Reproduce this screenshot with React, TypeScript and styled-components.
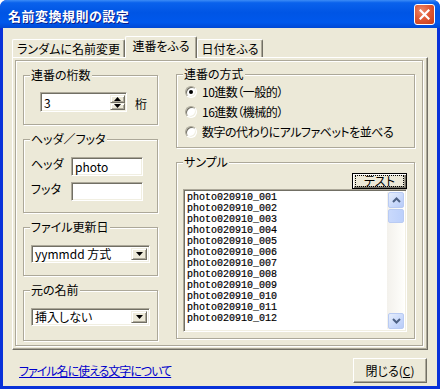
import React from 'react'
import styled, { createGlobalStyle } from 'styled-components'

const UI_FONT = `"Noto Sans CJK JP", "Noto Sans", sans-serif`

const GlobalStyle = createGlobalStyle`
  html, body {
    margin: 0;
    padding: 0;
    background: #ffffff;
  }
  body {
    font-family: ${UI_FONT};
    font-size: 12px;
    font-feature-settings: "palt" 1;
    color: #000;
  }
  * {
    box-sizing: border-box;
  }
`

const samples = Array.from({ length: 12 }, (_, i) => `photo020910_${String(i + 1).padStart(3, '0')}`)

export default function App() {
  return (
    <>
      <GlobalStyle />
      <Window>
        <TitleBar>
          <TitleText>名前変換規則の設定</TitleText>
          <CloseBox>
            <svg width="11" height="11" viewBox="0 0 11 11">
              <path d="M1.5 1.5 L9.5 9.5 M9.5 1.5 L1.5 9.5" stroke="#fff" strokeWidth="2.2" strokeLinecap="square" />
            </svg>
          </CloseBox>
        </TitleBar>

        <Client>
          <TabStrip>
            <Tab $w={113}>ランダムに名前変更</Tab>
            <Tab $w={72} $active>連番をふる</Tab>
            <Tab $w={66}>日付をふる</Tab>
          </TabStrip>

          <Panel>
            <InnerFrame>
              <LeftColumn>
                <Group $h={50} $pad="16px 0 0 16px">
                  <GroupTitle>連番の桁数</GroupTitle>
                  <InlineRow>
                    <SpinBox>
                      <FieldText>3</FieldText>
                      <SpinButtons>
                        <SpinButton>
                          <svg width="7" height="4" viewBox="0 0 7 4"><polygon points="3.5,0 7,4 0,4" fill="#000" /></svg>
                        </SpinButton>
                        <SpinButton>
                          <svg width="7" height="4" viewBox="0 0 7 4"><polygon points="0,0 7,0 3.5,4" fill="#000" /></svg>
                        </SpinButton>
                      </SpinButtons>
                    </SpinBox>
                    <Unit>桁</Unit>
                  </InlineRow>
                </Group>

                <Group $h={74} $pad="17px 0 0 7px">
                  <GroupTitle>ヘッダ／フッタ</GroupTitle>
                  <FieldRow>
                    <FieldLabel>ヘッダ</FieldLabel>
                    <TextBox>
                      <FieldText>photo</FieldText>
                    </TextBox>
                  </FieldRow>
                  <FieldRow>
                    <FieldLabel>フッタ</FieldLabel>
                    <TextBox />
                  </FieldRow>
                </Group>

                <Group $h={49} $pad="17px 0 0 7px">
                  <GroupTitle>ファイル更新日</GroupTitle>
                  <Combo>
                    <FieldText>yymmdd 方式</FieldText>
                    <ComboButton>
                      <svg width="7" height="4" viewBox="0 0 7 4"><polygon points="0,0 7,0 3.5,4" fill="#000" /></svg>
                    </ComboButton>
                  </Combo>
                </Group>

                <Group $h={51} $pad="17px 0 0 7px">
                  <GroupTitle>元の名前</GroupTitle>
                  <Combo>
                    <FieldText>挿入しない</FieldText>
                    <ComboButton>
                      <svg width="7" height="4" viewBox="0 0 7 4"><polygon points="0,0 7,0 3.5,4" fill="#000" /></svg>
                    </ComboButton>
                  </Combo>
                </Group>
              </LeftColumn>

              <RightColumn>
                <Group $h={74} $pad="7px 0 0 8px">
                  <GroupTitle>連番の方式</GroupTitle>
                  <RadioRow>
                    <Radio $checked />
                    <span>10進数（一般的）</span>
                  </RadioRow>
                  <RadioRow>
                    <Radio />
                    <span>16進数（機械的）</span>
                  </RadioRow>
                  <RadioRow>
                    <Radio />
                    <span>数字の代わりにアルファベットを並べる</span>
                  </RadioRow>
                </Group>

                <Group $h={177} $pad="10px 7px 0 6px">
                  <GroupTitle>サンプル</GroupTitle>
                  <ButtonRow>
                    <DefaultButton>
                      <FocusRing>テスト</FocusRing>
                    </DefaultButton>
                  </ButtonRow>
                  <ListBox>
                    <ListItems>
                      {samples.map((s) => (
                        <ListItem key={s}>{s}</ListItem>
                      ))}
                    </ListItems>
                    <ScrollBar>
                      <ScrollButton>
                        <svg width="9" height="6" viewBox="0 0 9 6"><path d="M1 5 L4.5 1.5 L8 5" stroke="#4d6185" strokeWidth="2" fill="none" /></svg>
                      </ScrollButton>
                      <ScrollThumb />
                      <ScrollTrack />
                      <ScrollButton>
                        <svg width="9" height="6" viewBox="0 0 9 6"><path d="M1 1 L4.5 4.5 L8 1" stroke="#4d6185" strokeWidth="2" fill="none" /></svg>
                      </ScrollButton>
                    </ScrollBar>
                  </ListBox>
                </Group>
              </RightColumn>
            </InnerFrame>
          </Panel>

          <Footer>
            <HelpLink>ファイル名に使える文字について</HelpLink>
            <PushButton>
              閉じる(<u>C</u>)
            </PushButton>
          </Footer>
        </Client>
      </Window>
    </>
  )
}

const Window = styled.div`
    width: 440px;
    height: 389px;
    display: flex;
    flex-direction: column;
    background: #0831d9;
    border-radius: 7px 7px 0 0;
    overflow: hidden;
`

const TitleBar = styled.div`
    height: 28px;
    flex: none;
    display: flex;
    align-items: center;
    justify-content: space-between;
    padding: 2px 5px 0 8px;
    background: linear-gradient(180deg, #3c8cf6 0%, #0a62ec 10%, #0055e5 45%, #0058ec 80%, #0048d4 100%);
`

const TitleText = styled.span`
    color: #ffffff;
    font-weight: 700;
    font-size: 13px;
    letter-spacing: 0.5px;
    text-shadow: 1px 1px 0 #0b1d8c;
`

const CloseBox = styled.div`
    width: 21px;
    height: 21px;
    margin-top: -1px;
    display: flex;
    align-items: center;
    justify-content: center;
    border: 1px solid #ffffff;
    border-radius: 3px;
    background: radial-gradient(circle at 35% 30%, #ee8a6a 0%, #e05a36 45%, #c53b17 100%);
`

const Client = styled.div`
    flex: 1;
    margin: 0 3px 3px;
    background: #ece9d8;
    display: flex;
    flex-direction: column;
    padding: 8px 9px 0 9px;
`

const TabStrip = styled.div`
    height: 21px;
    display: flex;
    align-items: flex-end;
    position: relative;
    z-index: 1;
`

const Tab = styled.div<{ $active?: boolean; $w: number }>`
    width: ${(p) => p.$w}px;
    height: ${(p) => (p.$active ? 22 : 18)}px;
    margin-bottom: ${(p) => (p.$active ? -1 : 0)}px;
    padding-bottom: ${(p) => (p.$active ? 3 : 0)}px;
    display: flex;
    align-items: center;
    justify-content: center;
    background: #ece9d8;
    border-top: 1px solid #ffffff;
    border-left: 1px solid #ffffff;
    border-right: 1px solid #716f64;
    box-shadow: inset -1px 0 0 #aca899;
    border-radius: 2px 2px 0 0;
    line-height: 14px;
    white-space: nowrap;
`

const Panel = styled.div`
    height: 293px;
    flex: none;
    display: flex;
    border: 1px solid;
    border-color: #ffffff #716f64 #716f64 #ffffff;
    box-shadow: inset -1px -1px 0 #aca899;
    padding: 2px 4px 3px 2px;
`

const InnerFrame = styled.div`
    flex: 1;
    display: flex;
    gap: 18px;
    border: 1px solid #aca899;
    box-shadow: inset 1px 1px 0 #ffffff, 1px 1px 0 #ffffff;
    padding: 14px 7px 0 7px;
`

const LeftColumn = styled.div`
    width: 135px;
    display: flex;
    flex-direction: column;
    gap: 14px;
`

const RightColumn = styled.div`
    flex: 1;
    display: flex;
    flex-direction: column;
    gap: 14px;
    margin-top: -1px;
`

const Group = styled.div<{ $h: number; $pad: string }>`
    position: relative;
    height: ${(p) => p.$h}px;
    flex: none;
    padding: ${(p) => p.$pad};
    border: 1px solid #aca899;
    box-shadow: inset 1px 1px 0 #ffffff, 1px 1px 0 #ffffff;
`

const GroupTitle = styled.span`
    position: absolute;
    top: -8px;
    left: 6px;
    padding: 0 1px;
    background: #ece9d8;
    line-height: 14px;
    white-space: nowrap;
`

const InlineRow = styled.div`
    display: flex;
    align-items: center;
`

const Sunken = styled.div`
    background: #ffffff;
    border: 1px solid;
    border-color: #aca899 #ffffff #ffffff #aca899;
    box-shadow: inset 1px 1px 0 #716f64, inset -1px -1px 0 #f1efe2;
`

const SpinBox = styled(Sunken)`
    width: 87px;
    height: 20px;
    display: flex;
    align-items: stretch;
    padding: 2px 1px 1px 2px;
`

const FieldText = styled.span`
    flex: 1;
    display: flex;
    align-items: center;
    line-height: 14px;
    white-space: nowrap;
    padding-left: 1px;
`

const SpinButtons = styled.div`
    width: 15px;
    display: flex;
    flex-direction: column;
`

const Raised = styled.div`
    background: #ece9d8;
    border: 1px solid;
    border-color: #f1efe2 #716f64 #716f64 #f1efe2;
    box-shadow: inset 1px 1px 0 #ffffff, inset -1px -1px 0 #aca899;
    display: flex;
    align-items: center;
    justify-content: center;
`

const SpinButton = styled(Raised)`
    flex: 1;
`

const Unit = styled.span`
    margin-left: 8px;
    line-height: 14px;
    margin-top: 4px;
`

const FieldRow = styled.div`
    display: flex;
    align-items: center;
    height: 19px;
    margin-bottom: 6px;
`

const FieldLabel = styled.span`
    width: 40px;
    line-height: 14px;
    margin-bottom: 6px;
    white-space: nowrap;
`

const TextBox = styled(Sunken)`
    width: 72px;
    height: 19px;
    display: flex;
    padding: 2px 2px 1px 2px;
`

const Combo = styled(Sunken)`
    width: 119px;
    height: 18px;
    display: flex;
    padding: 2px 2px 2px 2px;
`

const ComboButton = styled(Raised)`
    width: 16px;
`

const RadioRow = styled.div`
    height: 20px;
    display: flex;
    align-items: center;
    gap: 5px;
    white-space: nowrap;
    line-height: 14px;
    letter-spacing: -0.5px;
`

const Radio = styled.span<{ $checked?: boolean }>`
    width: 12px;
    height: 12px;
    flex: none;
    border-radius: 50%;
    background: #ffffff;
    border: 1px solid;
    border-color: #aca899 #ffffff #ffffff #aca899;
    box-shadow: inset 1px 1px 0 #716f64, inset -1px -1px 0 #f1efe2;
    display: flex;
    align-items: center;
    justify-content: center;
    &::after {
        content: '';
        width: 4px;
        height: 4px;
        border-radius: 50%;
        background: ${(p) => (p.$checked ? '#000' : 'transparent')};
    }
`

const ButtonRow = styled.div`
    display: flex;
    justify-content: flex-end;
`

const DefaultButton = styled.div`
    width: 55px;
    height: 16px;
    border: 1px solid #000000;
    background: #ece9d8;
    box-shadow: inset 1px 1px 0 #ffffff, inset -1px -1px 0 #716f64, inset -2px -2px 0 #aca899;
    padding: 2px 3px;
    display: flex;
`

const FocusRing = styled.span`
    flex: 1;
    display: flex;
    align-items: center;
    justify-content: center;
    outline: 1px dotted #000000;
    line-height: 10px;
    font-size: 12px;
`

const ListBox = styled(Sunken)`
    height: 143px;
    display: flex;
    padding: 2px 2px 2px 2px;
`

const ListItems = styled.div`
    flex: 1;
    padding-left: 1px;
    overflow: hidden;
`

const ListItem = styled.div`
    font-family: "Liberation Mono", "DejaVu Sans Mono", monospace;
    font-size: 10px;
    line-height: 11px;
    height: 11px;
    white-space: nowrap;
    color: #000;
    -webkit-text-stroke: 0.2px #000;
`

const ScrollBar = styled.div`
    width: 17px;
    display: flex;
    flex-direction: column;
    background: linear-gradient(90deg, #f3f1ec, #fefefb);
    padding: 0 0 0 1px;
`

const ScrollButton = styled.div`
    height: 16px;
    flex: none;
    border: 1px solid #b9cbf3;
    border-radius: 2px;
    background: linear-gradient(135deg, #e6eefc 0%, #c8d8fb 60%, #b7cbf8 100%);
    display: flex;
    align-items: center;
    justify-content: center;
`

const ScrollThumb = styled.div`
    height: 14px;
    margin-top: 1px;
    flex: none;
    border: 1px solid #b9cbf3;
    border-radius: 2px;
    background: linear-gradient(90deg, #c9d9fc 0%, #bcd0fb 100%);
`

const ScrollTrack = styled.div`
    flex: 1;
`

const Footer = styled.div`
    flex: 1;
    display: flex;
    align-items: center;
    justify-content: space-between;
    padding: 8px 1px 3px 7px;
`

const HelpLink = styled.a`
    color: #0000cc;
    text-decoration: underline;
    line-height: 14px;
    letter-spacing: -1px;
    cursor: pointer;
`

const PushButton = styled.div`
    width: 74px;
    height: 25px;
    display: flex;
    align-items: center;
    justify-content: center;
    background: #ece9d8;
    border: 1px solid;
    border-color: #ffffff #716f64 #716f64 #ffffff;
    box-shadow: inset -1px -1px 0 #aca899;
    line-height: 14px;
`
